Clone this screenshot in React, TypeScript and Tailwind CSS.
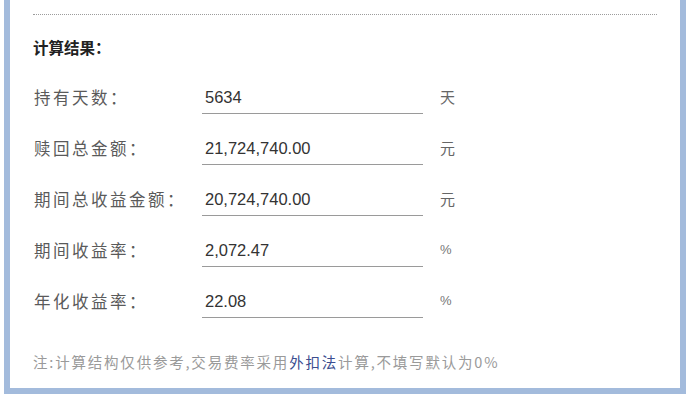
import React from 'react';

interface ResultRow {
  label: string;
  value: string;
  unit: string;
}

const rows: ResultRow[] = [
  { label: '持有天数：', value: '5634', unit: '天' },
  { label: '赎回总金额：', value: '21,724,740.00', unit: '元' },
  { label: '期间总收益金额：', value: '20,724,740.00', unit: '元' },
  { label: '期间收益率：', value: '2,072.47', unit: '%' },
  { label: '年化收益率：', value: '22.08', unit: '%' },
];

const cjk = { fontFamily: '"Noto Sans CJK SC", "Noto Sans", sans-serif' };
const arial = { fontFamily: '"Liberation Sans", Arial, "Noto Sans CJK SC", sans-serif' };

export default function App() {
  return (
    <div className="w-[692px] h-[403px] bg-white overflow-hidden">
      {/* result panel */}
      <div className="ml-[4px] w-[682px] border-x-[6px] border-b-[6px] border-[#a3bbdc] bg-white px-[23px] pt-[14px] pb-[16px]">
        <div className="border-t border-dotted border-[#9c9c9c]" />

        <h3 className="mt-[22px] h-[20px] leading-[20px] text-[15.5px] font-bold text-[#222]" style={cjk}>
          计算结果：
        </h3>

        <div className="mt-[24px] flex flex-col gap-[18px]">
          {rows.map((row) => (
            <div key={row.label} className="flex items-start h-[33px]">
              <div
                className="w-[169px] pl-[1px] leading-[32px] text-[16.5px] tracking-[2.5px] text-[#5a5a5a]"
                style={cjk}
              >
                {row.label}
              </div>
              <div
                className="w-[221px] h-[33px] border-b border-[#9a9a9a] pl-[3px] leading-[32px] text-[16.5px] text-[#333]"
                style={arial}
              >
                {row.value}
              </div>
              <div
                className={
                  row.unit === '%'
                    ? 'ml-[17px] leading-[32px] text-[13px] text-[#777]'
                    : 'ml-[17px] leading-[32px] text-[15px] text-[#666]'
                }
                style={row.unit === '%' ? arial : cjk}
              >
                {row.unit}
              </div>
            </div>
          ))}
        </div>

        <p className="mt-[34px] h-[20px] leading-[20px] text-[14.5px] tracking-[1.8px] text-[#9a9a9a]" style={cjk}>
          注:计算结构仅供参考,交易费率采用<span className="text-[#3b4d8f]">外扣法</span>计算,不填写默认为0%
        </p>
      </div>
    </div>
  );
}
